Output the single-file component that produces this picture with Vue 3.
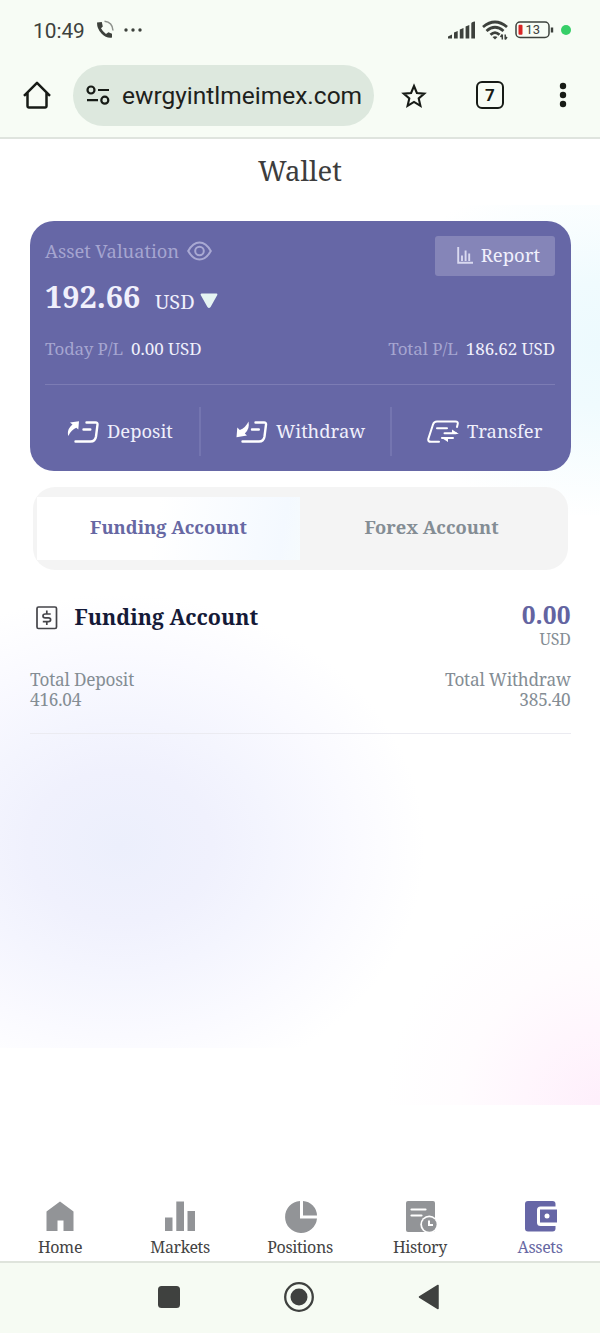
<script setup>
const tabs = [
  { id: 'home', label: 'Home' },
  { id: 'markets', label: 'Markets' },
  { id: 'positions', label: 'Positions' },
  { id: 'history', label: 'History' },
  { id: 'assets', label: 'Assets' },
]
</script>

<template>
  <div class="phone">
    <header class="chrome">
      <div class="status">
        <span class="clock">10:49</span>
        <svg class="call" width="18" height="20" viewBox="0 0 18 20">
          <path d="M1 2.500 5.800 2l1 4.500-1.800 1.800q1.800 3.600 5 5.600l2.400-1.700 3.600 1.600v3.700Q10.500 18.500 5.700 13.700T1 2.500Z" fill="#3d413c" />
          <path d="M8.500 1.200Q16.500 2 17 10.500" fill="none" stroke="#8d918c" stroke-width="1.500" />
        </svg>
        <svg class="dots" width="18" height="4" viewBox="0 0 18 4" fill="#3d413c"><circle cx="2" cy="2" r="1.700" /><circle cx="9" cy="2" r="1.700" /><circle cx="16" cy="2" r="1.700" /></svg>
        <span class="grow"></span>
        <svg width="27" height="18" viewBox="0 0 27 18" fill="#3d413c">
          <path d="M0 17.500v-2L4 13.500v4ZM6 17.500v-6L9.700 10v7.500ZM11.800 17.500V8.500L15.500 7v10.500ZM17.600 17.500V5.500L21.300 4v13.500ZM23.300 17.500V2.500Q23.300 1 27 .5v17Z" />
        </svg>
        <svg class="wifi" width="26" height="20" viewBox="0 0 26 20" fill="none" stroke="#3d413c" stroke-width="2.800">
          <path d="M1 7Q13-3 25 7M4.500 11Q13 3.500 21.500 11M8.500 14.800Q13 10.500 17.500 14.800" />
          <path d="m10.500 17 2.500 2.500 2.500-2.500q-2.500-1.500-5 0Z" fill="#3d413c" stroke="none" />
          <path d="M20.300 14.500v5m0-5-1.800 2.500M23.200 14.500v5m0 0 1.800-2.500" stroke-width="1.500" />
        </svg>
        <svg class="battery" width="39" height="18" viewBox="0 0 39 18">
          <rect x="1" y="1" width="33" height="15.500" rx="4" fill="none" stroke="#3d413c" stroke-width="1.500" />
          <path d="M37 6.500v5" stroke="#3d413c" stroke-width="2.400" />
          <rect x="3.500" y="3.800" width="4" height="10" rx="1" fill="#d92525" />
          <text x="10.500" y="13.300" class="charge">13</text>
        </svg>
        <span class="live"></span>
      </div>
      <div class="toolbar">
        <svg class="home" width="28" height="28" viewBox="0 0 28 28" fill="none" stroke="#171b16" stroke-width="2.500" stroke-linejoin="round">
          <path d="M1 14.800 14 1.800l13 13M4.500 12v13.300q0 1.200 1.200 1.200h16.600q1.200 0 1.200-1.200V12" />
        </svg>
        <div class="address">
          <svg width="24" height="20" viewBox="0 0 24 20" fill="none" stroke="#171b16" stroke-width="2.200">
            <circle cx="5" cy="5" r="3.500" /><path d="M12 5h11M1 15.200h11" /><circle cx="18.800" cy="15.200" r="3.500" />
          </svg>
          <span>ewrgyintlmeimex.com</span>
        </div>
        <svg class="star" width="26" height="26" viewBox="0 0 26 26" fill="none" stroke="#171b16" stroke-width="2.100">
          <path d="m13 3 2.900 7 7.400.6-5.600 4.900 1.700 7.300L13 18.900l-6.400 3.900 1.700-7.300-5.600-4.900 7.400-.6Z" />
        </svg>
        <span class="count">7</span>
        <svg class="menu" width="8" height="26" viewBox="0 0 8 26" fill="#171b16"><circle cx="4" cy="4" r="3.200" /><circle cx="4" cy="13" r="3.200" /><circle cx="4" cy="22" r="3.200" /></svg>
      </div>
    </header>

    <main class="page">
      <h1>Wallet</h1>

      <section class="card">
        <div class="top">
          <span class="muted valuation">Asset Valuation</span>
          <svg class="eye" width="25" height="20" viewBox="0 0 25 20" fill="none" stroke="#a9a9d3" stroke-width="2">
            <path d="M1.200 10Q6 1.500 12.500 1.500T23.800 10Q19 18.500 12.500 18.500T1.200 10Z" /><circle cx="12.500" cy="10" r="4.300" />
          </svg>
          <span class="grow"></span>
          <button class="report">
            <svg width="16" height="17" viewBox="0 0 16 17" fill="none" stroke="#d9d9f0" stroke-width="1.900"><path d="M1.200 0v15.700H16M5 14V8.500M8.600 14V3.500M12.200 14V6.500" /></svg>
            <span>Report</span>
          </button>
        </div>
        <div class="balance">
          <strong>192.66</strong><span class="unit">USD</span>
          <svg width="18" height="16" viewBox="0 0 18 16"><path d="M1.500 1.500h15L9.800 13.500q-.8 1.200-1.600 0Z" fill="#e6f4f3" stroke="#e6f4f3" stroke-width="1.800" stroke-linejoin="round" /></svg>
        </div>
        <div class="profit">
          <span><i class="muted">Today P/L</i><b>0.00 USD</b></span>
          <span><i class="muted">Total P/L</i><b>186.62 USD</b></span>
        </div>
        <div class="actions">
          <div class="action deposit">
            <svg width="32" height="24" viewBox="0 0 32 24" fill="none" stroke="#fff" stroke-width="2.400" stroke-linecap="round" stroke-linejoin="round">
              <path d="m3 2.500 9-1.200-.7 8.200-2-1.700Q4.500 9.500 1.300 16-.5 9.500 5.500 4.500Z" fill="#fff" stroke="none" />
              <path d="M19.500 2.500H28.500q2.300 0 2 2.200L29 16.500q-.8 5-5.500 5h-15M16.500 9.500h6.800" />
            </svg>
            <span>Deposit</span>
          </div>
          <div class="action withdraw">
            <svg width="32" height="24" viewBox="0 0 32 24" fill="none" stroke="#fff" stroke-width="2.400" stroke-linecap="round" stroke-linejoin="round">
              <path d="M12.500 1.500Q14 9 8.800 13.500l2.200 2-10.500 1.700.8-9.700 2.500 2.500Q9.500 8 12.500 1.500Z" fill="#fff" stroke="none" />
              <path d="M19.500 2.500H28q2.300 0 2 2.200L28.500 16.500q-.8 5-5.500 5H6.500M16 9.500h6.800" />
            </svg>
            <span>Withdraw</span>
          </div>
          <div class="action transfer">
            <svg width="33" height="24" viewBox="0 0 33 24" fill="none" stroke="#fff" stroke-width="2" stroke-linecap="round" stroke-linejoin="round">
              <path d="M12 21.800H4q-3.500 0-2.600-3.200L6 4.500q1-3 4-3h18.500q2.800 0 2.200 2.500L30 7M10 8.300h10M17.500 13.300H29M26 18H15" />
              <path d="m25 9.500 6.800 4.500H25ZM21 22l-7-4.500H21Z" fill="#fff" stroke="none" />
            </svg>
            <span>Transfer</span>
          </div>
        </div>
      </section>

      <nav class="switch">
        <span class="on"><em>Funding Account</em></span>
        <span><em>Forex Account</em></span>
      </nav>

      <section class="account">
        <div class="heading">
          <svg width="22" height="24" viewBox="0 0 22 24" fill="none" stroke="#444449" stroke-width="1.700">
            <rect x="1" y="1" width="19.500" height="21.500" rx="1.500" />
            <path d="M14.700 8H9.200q-2.200 0-2.200 1.900t2.200 1.900h3.200q2.200 0 2.200 1.900t-2.200 1.900H6.800M10.800 4.500v3.500M10.800 15.500v3.500" />
          </svg>
          <h2>Funding Account</h2>
          <div class="amount"><strong>0.00</strong><span>USD</span></div>
        </div>
        <div class="totals">
          <div><span class="dep">Total Deposit</span><span class="num">416.04</span></div>
          <div class="right"><span class="wd">Total Withdraw</span><span class="num">385.40</span></div>
        </div>
      </section>

      <footer class="tabbar">
        <div v-for="t in tabs" :key="t.id" class="tab" :class="t.id">
          <svg width="36" height="36" viewBox="0 0 36 36" fill="#929497">
            <path v-if="t.id === 'home'" d="M18 3.500 31.500 13.500V33h-10V22.500h-6V33H4.500V13.500Z" />
            <path v-else-if="t.id === 'markets'" d="M3 19.500h7.500V33H3ZM14.300 3.500H22V33h-7.700ZM25.500 13h7.500v20h-7.500Z" />
            <g v-else-if="t.id === 'positions'"><path d="M18 3A16 16 0 1 0 35 20.500H18Z" /><path d="M21 3A15 15 0 0 1 35 17.500h-14Z" /></g>
            <g v-else-if="t.id === 'history'">
              <rect x="4" y="3" width="29" height="31" rx="2" />
              <path d="M9.500 11.500h14M9.500 17.500h10" stroke="#fff" stroke-width="2.200" stroke-linecap="round" />
              <circle cx="27.300" cy="26.500" r="9" fill="#fff" /><circle cx="27.300" cy="26.500" r="7.300" />
              <path d="M27 22.500v4.500h4" fill="none" stroke="#fff" stroke-width="2" />
            </g>
            <g v-else>
              <rect x="3" y="3" width="30.500" height="30.500" rx="3" fill="#6666a6" />
              <path d="M36 8.500H18.500q-3.500 0-3.500 3.500v12.500q0 3.500 3.500 3.500H36Z" fill="#fff" />
              <path d="M35 11.500H18v13h17Z" fill="#6666a6" />
              <circle cx="25" cy="18" r="2.500" fill="#fff" />
            </g>
          </svg>
          <span>{{ t.label }}</span>
        </div>
      </footer>
    </main>

    <div class="system">
      <svg width="24" height="24" viewBox="0 0 24 24"><rect x="1" y="1" width="22" height="22" rx="3.500" fill="#3f413f" /></svg>
      <svg width="32" height="32" viewBox="0 0 32 32"><circle cx="16" cy="16" r="13.800" fill="none" stroke="#3f413f" stroke-width="2.300" /><circle cx="16" cy="16" r="8.500" fill="#3f413f" /></svg>
      <svg width="22" height="26" viewBox="0 0 22 26"><path d="M20 1.500v23L1.500 13Z" fill="#3f413f" stroke="#3f413f" stroke-width="1.500" stroke-linejoin="round" /></svg>
    </div>
  </div>
</template>

<style>
body { margin: 0; background: #fff; }
</style>

<style scoped>
* { box-sizing: border-box; }
svg { display: block; flex: none; }
.grow { flex: 1; }
.phone { width: 600px; height: 1333px; display: flex; flex-direction: column; overflow: hidden; font-family: "Noto Serif", "DejaVu Serif Condensed", "DejaVu Serif", serif; white-space: nowrap; }
.chrome { height: 139px; background: #f7fcf5; border-bottom: 2px solid #dfe4de; font-family: Roboto, sans-serif; flex: none; }
.status { height: 60px; padding: 0 29px 0 33px; display: flex; align-items: center; }
.clock { font-size: 20.800px; color: #3d413c; width: 63px; padding-top: 1px; }
.call { margin-right: 10px; }
.wifi { margin-left: 7px; }
.battery { margin-left: 7px; }
.charge { font-size: 13px; fill: #3d413c; }
.live { width: 10px; height: 10px; border-radius: 50%; background: #36cf68; margin-left: 7px; }
.toolbar { height: 70px; padding: 0 33px 0 23px; display: flex; align-items: center; }
.address { width: 301px; height: 61px; border-radius: 31px; background: #dde8de; margin-left: 22px; padding-left: 13px; display: flex; align-items: center; gap: 12px; font-size: 24.500px; color: #1d211c; }
.star { margin-left: 27px; margin-top: 2px; }
.count { width: 28px; height: 28px; border: 2.500px solid #171b16; border-radius: 6px; margin-left: 49px; font-size: 17px; font-weight: 700; line-height: 24px; text-align: center; color: #171b16; }
.menu { margin-left: 55px; }
.page { flex: 1; display: flex; flex-direction: column; background:
  radial-gradient(ellipse 230px 175px at 100% 45%, #edfafe 0, #f0fbfe 35%, #fff0 100%) right 66px / 300px 310px no-repeat,
  radial-gradient(ellipse 305px 252px at 120px 259px, #eceffc 0, #f0f1fd 30%, #f4f5fe 50%, #fafaff 75%, #fff0 100%) 0 448px / 450px 461px no-repeat,
  radial-gradient(circle 215px at 100% 100%, #feeffb 0, #fff6fd 35%, #fffcfe 65%, #fff0 100%) right 746px / 240px 220px no-repeat,
  #fff; }
h1 { margin: 12px 0 0; font-size: 27.500px; line-height: 40px; font-weight: 400; text-align: center; color: #3d3d3d; }
.card { margin: 29.500px 29.500px 0 30px; height: 250px; background: #6667a6; border-radius: 24px; padding: 15px 15.500px 15px 15px; color: #f0f0fc; }
i, em { font-style: normal; }
.muted { color: #a5a5d0; }
.top { height: 40px; display: flex; align-items: flex-start; }
.valuation { font-size: 18.300px; line-height: 29px; }
.eye { margin: 5px 0 0 8px; }
.report { width: 120px; height: 40px; border: 0; border-radius: 3px; background: #8585b8; color: #f0f0fc; font: inherit; font-size: 18.500px; line-height: 26px; padding: 0 15px 2px 22px; display: flex; align-items: center; justify-content: space-between; }
.report svg { margin-top: 2px; }
.balance { height: 42px; display: flex; align-items: center; }
.balance strong { font-size: 30.500px; width: 110px; margin-top: -1px; }
.balance .unit { font-size: 20px; width: 45px; padding-top: 9px; }
.balance svg { margin-top: 9px; }
.profit { height: 67px; border-bottom: 1.500px solid #7c7cb4; display: flex; justify-content: space-between; font-size: 17px; letter-spacing: -.08px; line-height: 61px; }
.profit b { font-weight: 400; margin-left: 8px; }
.actions { display: grid; grid-template-columns: 156px 191px 1fr; margin-top: 22px; height: 49px; font-size: 18.400px; }
.action { display: flex; align-items: center; border-right: 2px solid #7475b0; gap: 8px; }
.action span { margin-top: -1px; }
.action svg { margin-top: 1px; }
.deposit { padding-left: 22px; }
.withdraw { padding-left: 35px; }
.transfer { padding-left: 35px; border: 0; gap: 7px; }
.switch { margin: 16px 32px 0 33px; height: 83.500px; border-radius: 22px; background: #f4f4f4; display: flex; padding: 10px 4px; font-size: 18.300px; font-weight: 700; color: #848d94; }
.switch span { width: 263px; text-align: center; line-height: 60px; height: 63px; }
.switch .on { color: #6768a3; background: linear-gradient(100deg, #fff 45%, #f4f9ff 92%, #f6fbfd); }
.account { margin: 29px 29.500px 0 30px; height: 135px; border-bottom: 1.500px solid #ebebf1; color: #848d94; }
.heading { display: flex; padding-left: 6px; height: 70px; }
.heading > svg { margin-top: 7px; }
h2 { margin: 0 0 0 16.500px; font-size: 21.400px; line-height: 35px; color: #151a38; }
.amount { margin-left: auto; text-align: right; display: flex; flex-direction: column; }
.amount strong { font-size: 24.500px; line-height: 32px; color: #6364a1; }
.amount span { font-size: 16px; letter-spacing: -.3px; line-height: 16px; }
.totals { display: flex; justify-content: space-between; font-size: 17.200px; letter-spacing: -.2px; line-height: 20px; padding-top: 1px; }
.totals div { display: flex; flex-direction: column; }
.right { text-align: right; }
.tabbar { margin-top: auto; height: 63px; display: grid; grid-template-columns: repeat(5, 1fr); }
.tab { display: flex; flex-direction: column; align-items: center; font-size: 16px; letter-spacing: -.35px; line-height: 24px; color: #444; }
.tab.assets { color: #6768a3; }
.tab svg { margin-bottom: 1px; }
.system { height: 72px; flex: none; background: #f6fbf3; border-top: 2px solid #dfe4dc; display: flex; align-items: center; padding: 0 0 2px 157px; }
.system svg:nth-child(2) { margin-left: 102px; }
.system svg:nth-child(3) { margin-left: 103px; }
</style>
